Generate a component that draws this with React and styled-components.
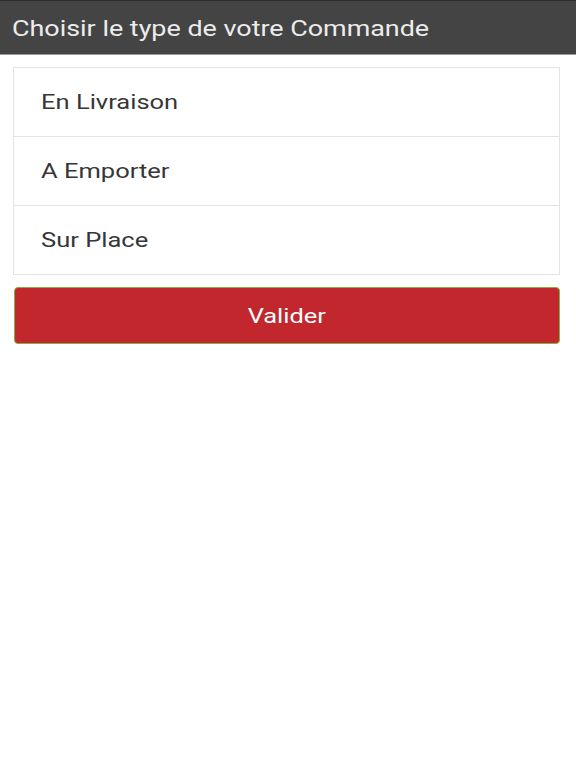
import styled, { createGlobalStyle } from "styled-components";

const GlobalStyle = createGlobalStyle`
  body {
    margin: 0;
    background: #ffffff;
    font-family: Roboto, "Liberation Sans", sans-serif;
  }
`;

const Page = styled.div`
  width: 576px;
  min-height: 768px;
  background: #ffffff;
`;

const Header = styled.header`
  height: 53px;
  background: #444444;
  border-top: 1px solid #2c2c2c;
  border-bottom: 1px solid #9a9a9a;
  display: flex;
  align-items: center;
  padding: 0 12px;
  color: #ececec;
  font-size: 22.5px;
`;

const Label = styled.span`
  display: inline-block;
  transform: scaleX(${(p) => p.$stretch || 1});
  transform-origin: ${(p) => (p.$center ? "center" : "left")};
  white-space: nowrap;
`;

const Content = styled.div`
  padding: 12px 16px 0 13px;
  display: flex;
  flex-direction: column;
  gap: 12px;
`;

const List = styled.ul`
  list-style: none;
  margin: 0;
  padding: 0;
  border: 1px solid #e3e3e3;
  background: #ffffff;
`;

const Item = styled.li`
  height: 68px;
  display: flex;
  align-items: center;
  padding-left: 27px;
  font-size: 20px;
  color: #363636;
  border-top: ${(p) => (p.$first ? "none" : "1px solid #e3e3e3")};
`;

const Button = styled.button`
  height: 57px;
  margin-left: 1px;
  background: #c1272d;
  border: 1px solid #7cb342;
  border-radius: 4px;
  color: #ffffff;
  font-family: Roboto, "Liberation Sans", sans-serif;
  font-size: 20px;
  cursor: pointer;
`;

const options = ["En Livraison", "A Emporter", "Sur Place"];

export default function App() {
  return (
    <>
      <GlobalStyle />
      <Page>
        <Header>
          <Label $stretch={1.195}>Choisir le type de votre Commande</Label>
        </Header>
        <Content>
          <List>
            {options.map((o, i) => (
              <Item key={o} $first={i === 0}>
                <Label $stretch={1.275}>{o}</Label>
              </Item>
            ))}
          </List>
          <Button type="button">
            <Label $stretch={1.27} $center>
              Valider
            </Label>
          </Button>
        </Content>
      </Page>
    </>
  );
}
